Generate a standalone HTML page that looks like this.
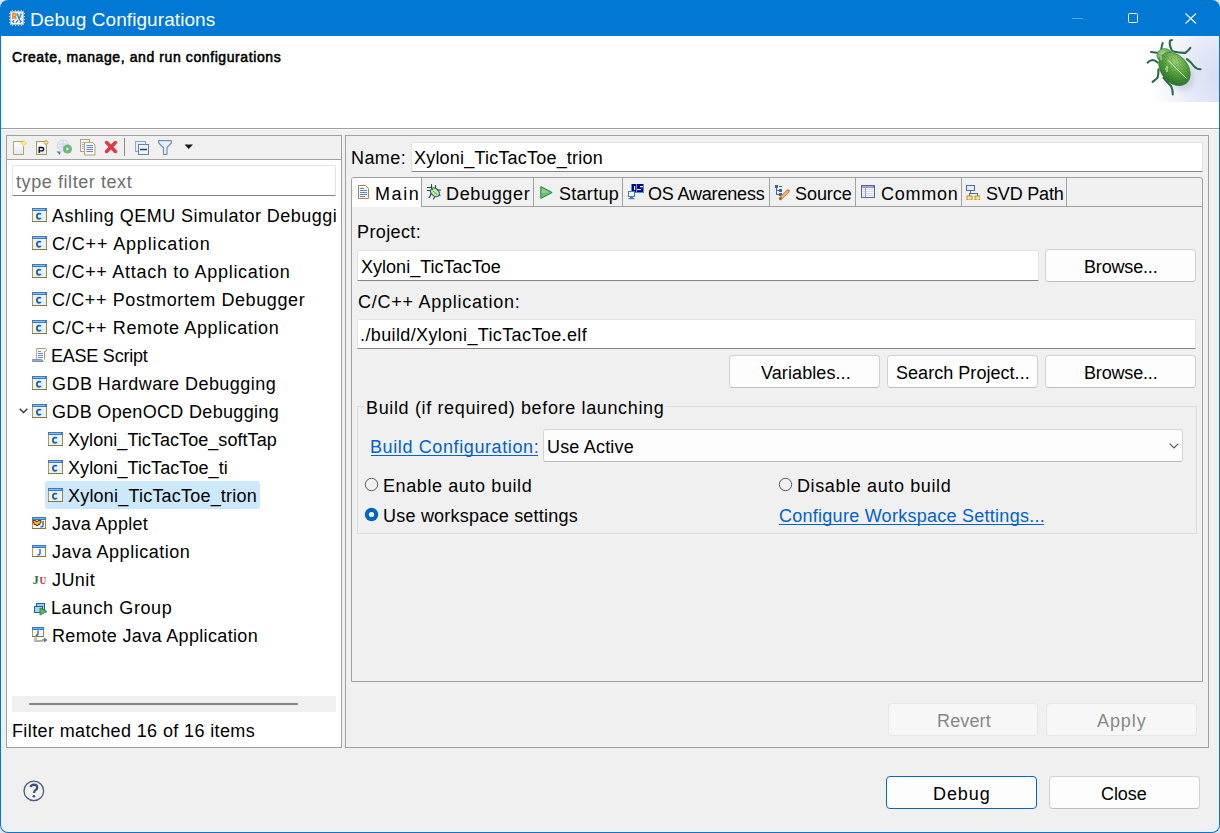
<!DOCTYPE html>
<html><head><meta charset="utf-8"><style>
html,body{margin:0;padding:0;width:1220px;height:833px;overflow:hidden;background:#dfe6ea;font-family:'Liberation Sans', sans-serif;}
#win{position:absolute;left:0;top:0;width:1220px;height:833px;overflow:hidden;}
</style></head><body><div id="win">
<div style="position:absolute;left:0px;top:0px;width:1220px;height:833px;background:#f0f0f0;border-radius:8px;"></div>
<div style="position:absolute;left:0px;top:0px;width:1220px;height:36px;background:#0078d4;border-radius:8px 8px 0 0;"></div>
<div style="position:absolute;left:0px;top:36px;width:1220px;height:797px;border:1px solid #0078d4;border-top:none;border-radius:0 0 8px 8px;box-sizing:border-box;"></div>
<div style="position:absolute;left:1px;top:36px;width:1218px;height:92px;background:#fff;"></div>
<div style="position:absolute;left:1px;top:128px;width:1218px;height:1px;background:#a0a0a0;"></div>
<div style="position:absolute;left:1px;top:129px;width:1218px;height:1px;background:#fff;"></div>
<svg style="position:absolute;left:9px;top:10px;" width="16" height="16" viewBox="0 0 16 16">
<rect x="1.5" y="1.5" width="13" height="13" fill="#f4f1ed" stroke="#b4bcc4"/>
<g fill="#d8dce0"><rect x="3" y="0" width="1" height="1"/><rect x="6" y="0" width="1" height="1"/><rect x="9" y="0" width="1" height="1"/><rect x="12" y="0" width="1" height="1"/>
<rect x="3" y="15" width="1" height="1"/><rect x="6" y="15" width="1" height="1"/><rect x="9" y="15" width="1" height="1"/><rect x="12" y="15" width="1" height="1"/>
<rect x="0" y="3" width="1" height="1"/><rect x="0" y="6" width="1" height="1"/><rect x="0" y="9" width="1" height="1"/><rect x="0" y="12" width="1" height="1"/>
<rect x="15" y="3" width="1" height="1"/><rect x="15" y="6" width="1" height="1"/><rect x="15" y="9" width="1" height="1"/><rect x="15" y="12" width="1" height="1"/></g>
<path d="M3.8 9V3.6H5.6Q7.1 3.6 7.1 5.1Q7.1 6.5 5.6 6.5H3.8M5.6 6.5L7.2 9" fill="none" stroke="#f07a2a" stroke-width="1.5"/>
<path d="M8.2 3.4L10.2 9L12.2 3.4" fill="none" stroke="#18a0dc" stroke-width="1.6"/>
<path d="M5 10.4L3.6 11.5L5 12.6M6.8 12.6L8.8 10.4M10.8 10.4L12.2 11.5L10.8 12.6" fill="none" stroke="#1a6fc8" stroke-width="1.1"/>
</svg>
<div style="position:absolute;left:30.00px;top:6.92px;font-size:19px;line-height:25px;font-weight:400;color:#fff;letter-spacing:0.075px;white-space:pre;">Debug Configurations</div>
<div style="position:absolute;left:1072px;top:18px;width:11px;height:1px;background:#58a3e6;"></div>
<div style="position:absolute;left:1128px;top:13px;width:10px;height:10px;border:1px solid #fff;border-radius:1.5px;box-sizing:border-box;"></div>
<svg style="position:absolute;left:1185px;top:13px;" width="12" height="11" viewBox="0 0 12 11"><path d="M0.5 0.5L11 10.5M11 0.5L0.5 10.5" stroke="#fff" stroke-width="1.1"/></svg>
<div style="position:absolute;left:12.00px;top:47.15px;font-size:14px;line-height:20px;font-weight:400;color:#000;letter-spacing:0.594px;white-space:pre;-webkit-text-stroke:0.55px #000;">Create, manage, and run configurations</div>
<div style="position:absolute;left:1146px;top:36px;width:73px;height:66px;background:radial-gradient(ellipse 95% 130% at 100% 62%, #d6dcf2 0%, #e3e7f6 38%, #f2f3fb 68%, rgba(255,255,255,0) 100%);"></div>
<svg style="position:absolute;left:1146px;top:36px;" width="73" height="66" viewBox="0 0 73 66">
<defs>
<radialGradient id="bgb" cx="0.35" cy="0.3" r="0.75"><stop offset="0" stop-color="#a8d880"/><stop offset="0.5" stop-color="#5aa840"/><stop offset="1" stop-color="#2a742c"/></radialGradient>
<radialGradient id="bgh" cx="0.4" cy="0.35" r="0.7"><stop offset="0" stop-color="#a8d880"/><stop offset="1" stop-color="#3a8a3a"/></radialGradient>
<pattern id="dots" width="2" height="2" patternUnits="userSpaceOnUse"><rect x="0" y="0" width="1" height="1" fill="#1e5a20"/></pattern>
<filter id="blr" x="-50%" y="-50%" width="200%" height="200%"><feGaussianBlur stdDeviation="2.5"/></filter>
</defs>
<ellipse cx="33" cy="38" rx="18" ry="13" transform="rotate(52 33 38)" fill="#8088a8" opacity="0.25" filter="url(#blr)"/>
<g stroke="#2a6a46" stroke-width="2.1" fill="none" stroke-linecap="round" stroke-linejoin="round">
<path d="M15 15.6 Q15.5 10 16.7 7.2"/><path d="M5 16 L13 17"/>
<path d="M26 14.8 Q23 9 24 4.7 L26 4"/>
<path d="M27.6 15.6 Q33 17 39.4 16.9 Q42 15 44.4 11.9"/>
<path d="M41 23.2 Q45 26 47.8 30 Q50 33 54.5 33.3"/>
<path d="M11.6 26.6 Q9 24 6.6 24 Q3.5 24.5 1.6 26.6"/>
<path d="M12.5 33.3 Q12.5 38 11.6 41.7 Q9 44 6.6 45.9"/>
<path d="M17.5 41.7 Q22 47 25 50.1 Q27 54 26.8 58.5"/>
</g>
<ellipse cx="18.4" cy="19.5" rx="7.5" ry="7" fill="url(#bgh)" stroke="#3a7a3a" stroke-width="0.6"/>
<ellipse cx="28.5" cy="33" rx="18.5" ry="13.5" transform="rotate(50 28.5 33)" fill="url(#bgb)" stroke="#3a7a38" stroke-width="0.6"/>
<ellipse cx="28.5" cy="33" rx="18" ry="13" transform="rotate(50 28.5 33)" fill="url(#dots)" opacity="0.5"/><path d="M21.7 24 L40.6 42.5" stroke="#dff3c8" stroke-width="0.9"/>
<path d="M20 31h2M19 33h3M20 35h2" stroke="#e8f6d8" stroke-width="1"/>
<path d="M14 21h2M14 23h2" stroke="#e0f0d0" stroke-width="0.9"/>
</svg>
<div style="position:absolute;left:6px;top:135px;width:336px;height:613px;border:1px solid #a0a0a0;box-sizing:border-box;background:#fff;"></div>
<div style="position:absolute;left:7px;top:136px;width:334px;height:23px;background:#f0f0f0;"></div>
<div style="position:absolute;left:7px;top:159px;width:334px;height:1px;background:#a0a0a0;"></div>
<svg style="position:absolute;left:13px;top:140px;" width="14" height="16" viewBox="0 0 14 16"><defs><linearGradient id="dg" x1="0" y1="0" x2="0" y2="1"><stop offset="0" stop-color="#ffffff"/><stop offset="1" stop-color="#dfe8f8"/></linearGradient></defs><path d="M0.5 1.5h10v13h-10z" fill="url(#dg)" stroke="#b8a468" shape-rendering="crispEdges"/><path d="M10.5 0.5v6M7.5 3.5h6" stroke="#f0c848" stroke-width="1.8"/><path d="M10.5 1.4v4.2M8.4 3.5h4.2" stroke="#fff6c0" stroke-width="0.7"/></svg>
<svg style="position:absolute;left:36px;top:139px;" width="14" height="17" viewBox="0 0 14 17"><path d="M0.5 2.5h10v13h-10z" fill="url(#dg)" stroke="#a89858" shape-rendering="crispEdges"/><path d="M3.2 14V8.5h2.4Q7.6 8.5 7.6 10.2Q7.6 11.9 5.6 11.9H3.2" fill="none" stroke="#111" stroke-width="1.3"/><path d="M10 0.5L12.8 3.5L10 6.5L7.2 3.5z" fill="#c89a20"/><path d="M10 1.5v4M8.2 3.5h3.6" stroke="#fff0b0" stroke-width="0.9"/></svg>
<svg style="position:absolute;left:56px;top:139px;" width="17" height="17" viewBox="0 0 17 17"><circle cx="7" cy="6.5" r="5.5" fill="#e8eef6" stroke="#b4c4dc" stroke-dasharray="1 0.6"/><path d="M3 5h8M3 8h8M7 1.5v10" stroke="#d0c0e0" stroke-width="0.6"/><circle cx="11.5" cy="10" r="4.5" fill="#6cb87a"/><path d="M10.4 8.2v3.6l3-1.8z" fill="#e8f8e8"/><path d="M0.5 12.5h4l-0.5 3.5z" fill="#5a78b0"/></svg>
<svg style="position:absolute;left:80px;top:139px;" width="16" height="17" viewBox="0 0 16 17"><rect x="0.5" y="0.5" width="9" height="12" fill="#f4f6fc" stroke="#b8a468"/><path d="M2 3.5h2M2 5.5h2M2 7.5h2M2 9.5h2" stroke="#8aa0c8" stroke-width="0.8"/><path d="M4.5 3.5h8l2.5 2.5v10h-10.5z" fill="#f4f6fc" stroke="#b8a468"/><path d="M6.5 6.5h6.5M6.5 8.5h6.5M6.5 10.5h6.5M6.5 12.5h6.5" stroke="#5a7cb8" stroke-width="0.9"/></svg>
<svg style="position:absolute;left:104px;top:140px;" width="14" height="14" viewBox="0 0 14 14"><path d="M2.6 2.6L11.4 11.4M11.4 2.6L2.6 11.4" stroke="#e03a48" stroke-width="3.6" stroke-linecap="round"/></svg>
<div style="position:absolute;left:124px;top:138px;width:1px;height:18px;background:#8c8c8c;"></div>
<svg style="position:absolute;left:135px;top:141px;" width="14" height="14" viewBox="0 0 14 14"><rect x="0.5" y="0.5" width="10" height="10" fill="#e4eefa" stroke="#8ea4c8"/><rect x="3.5" y="3.5" width="10" height="10" fill="#eef6fc" stroke="#6a7ea8"/><path d="M5 8.5h7" stroke="#1e4a88" stroke-width="1.6"/></svg>
<svg style="position:absolute;left:158px;top:140px;" width="14" height="15" viewBox="0 0 14 15"><path d="M0.7 0.7h12.6v2.3l-4.3 4.7v6.5l-3.5 0.6v-7.1l-4.8-4.7z" fill="#e2f4fc" stroke="#7a8cb0" stroke-width="1.2" stroke-linejoin="round"/></svg>
<svg style="position:absolute;left:184px;top:144px;" width="10" height="6" viewBox="0 0 10 6"><path d="M0.5 0.5h8.5l-4.25 4.5z" fill="#1a1a1a"/></svg>
<div style="position:absolute;left:12px;top:165px;width:324px;height:31px;background:#fff;border:1px solid #e3e3e3;border-bottom:1px solid #868686;box-sizing:border-box;border-radius:2px 2px 0 0;"></div>
<div style="position:absolute;left:16.00px;top:169.76px;font-size:18px;line-height:24px;font-weight:400;color:#6d6d6d;letter-spacing:0.577px;white-space:pre;">type filter text</div>
<div style="position:absolute;left:45px;top:481px;width:215px;height:28px;background:#cce8ff;border-radius:3px;"></div>
<div style="position:absolute;left:7px;top:200px;width:329px;height:495px;overflow:hidden;">
<svg style="position:absolute;left:25px;top:8px;" width="15" height="14" viewBox="0 0 15 14">
<rect x="1" y="3" width="13" height="10" fill="#e4f4fd"/>
<rect x="0" y="3" width="1" height="11" fill="#c0982e"/>
<rect x="14" y="3" width="1" height="11" fill="#a08838"/>
<rect x="0" y="13" width="15" height="1" fill="#857440"/>
<rect x="0" y="0" width="15" height="3" fill="#3f78bf"/>
<rect x="1" y="1" width="12" height="1" fill="#7fc0ee"/>
<path d="M8.9 6.2 Q8.3 5.5 7.1 5.5 Q4.9 5.6 4.9 8.2 Q4.9 10.8 7.1 10.9 Q8.3 10.9 8.9 10.1" fill="none" stroke="#24579a" stroke-width="1.7"/>
</svg>
<div style="position:absolute;left:45.00px;top:3.76px;font-size:18px;line-height:24px;font-weight:400;color:#000;letter-spacing:0.468px;white-space:pre;">Ashling QEMU Simulator Debuggi</div>
<svg style="position:absolute;left:25px;top:36px;" width="15" height="14" viewBox="0 0 15 14">
<rect x="1" y="3" width="13" height="10" fill="#e4f4fd"/>
<rect x="0" y="3" width="1" height="11" fill="#c0982e"/>
<rect x="14" y="3" width="1" height="11" fill="#a08838"/>
<rect x="0" y="13" width="15" height="1" fill="#857440"/>
<rect x="0" y="0" width="15" height="3" fill="#3f78bf"/>
<rect x="1" y="1" width="12" height="1" fill="#7fc0ee"/>
<path d="M8.9 6.2 Q8.3 5.5 7.1 5.5 Q4.9 5.6 4.9 8.2 Q4.9 10.8 7.1 10.9 Q8.3 10.9 8.9 10.1" fill="none" stroke="#24579a" stroke-width="1.7"/>
</svg>
<div style="position:absolute;left:45.00px;top:31.76px;font-size:18px;line-height:24px;font-weight:400;color:#000;letter-spacing:0.852px;white-space:pre;">C/C++ Application</div>
<svg style="position:absolute;left:25px;top:64px;" width="15" height="14" viewBox="0 0 15 14">
<rect x="1" y="3" width="13" height="10" fill="#e4f4fd"/>
<rect x="0" y="3" width="1" height="11" fill="#c0982e"/>
<rect x="14" y="3" width="1" height="11" fill="#a08838"/>
<rect x="0" y="13" width="15" height="1" fill="#857440"/>
<rect x="0" y="0" width="15" height="3" fill="#3f78bf"/>
<rect x="1" y="1" width="12" height="1" fill="#7fc0ee"/>
<path d="M8.9 6.2 Q8.3 5.5 7.1 5.5 Q4.9 5.6 4.9 8.2 Q4.9 10.8 7.1 10.9 Q8.3 10.9 8.9 10.1" fill="none" stroke="#24579a" stroke-width="1.7"/>
</svg>
<div style="position:absolute;left:45.00px;top:59.76px;font-size:18px;line-height:24px;font-weight:400;color:#000;letter-spacing:0.715px;white-space:pre;">C/C++ Attach to Application</div>
<svg style="position:absolute;left:25px;top:92px;" width="15" height="14" viewBox="0 0 15 14">
<rect x="1" y="3" width="13" height="10" fill="#e4f4fd"/>
<rect x="0" y="3" width="1" height="11" fill="#c0982e"/>
<rect x="14" y="3" width="1" height="11" fill="#a08838"/>
<rect x="0" y="13" width="15" height="1" fill="#857440"/>
<rect x="0" y="0" width="15" height="3" fill="#3f78bf"/>
<rect x="1" y="1" width="12" height="1" fill="#7fc0ee"/>
<path d="M8.9 6.2 Q8.3 5.5 7.1 5.5 Q4.9 5.6 4.9 8.2 Q4.9 10.8 7.1 10.9 Q8.3 10.9 8.9 10.1" fill="none" stroke="#24579a" stroke-width="1.7"/>
</svg>
<div style="position:absolute;left:45.00px;top:87.76px;font-size:18px;line-height:24px;font-weight:400;color:#000;letter-spacing:0.608px;white-space:pre;">C/C++ Postmortem Debugger</div>
<svg style="position:absolute;left:25px;top:120px;" width="15" height="14" viewBox="0 0 15 14">
<rect x="1" y="3" width="13" height="10" fill="#e4f4fd"/>
<rect x="0" y="3" width="1" height="11" fill="#c0982e"/>
<rect x="14" y="3" width="1" height="11" fill="#a08838"/>
<rect x="0" y="13" width="15" height="1" fill="#857440"/>
<rect x="0" y="0" width="15" height="3" fill="#3f78bf"/>
<rect x="1" y="1" width="12" height="1" fill="#7fc0ee"/>
<path d="M8.9 6.2 Q8.3 5.5 7.1 5.5 Q4.9 5.6 4.9 8.2 Q4.9 10.8 7.1 10.9 Q8.3 10.9 8.9 10.1" fill="none" stroke="#24579a" stroke-width="1.7"/>
</svg>
<div style="position:absolute;left:45.00px;top:115.76px;font-size:18px;line-height:24px;font-weight:400;color:#000;letter-spacing:0.635px;white-space:pre;">C/C++ Remote Application</div>
<svg style="position:absolute;left:25px;top:148px;" width="15" height="15" viewBox="0 0 15 15"><path d="M4.5 0.5h9a1.6 1.6 0 0 1 0 3h-1v8" fill="#f2f6fc" stroke="#b0a060"/><rect x="4" y="1" width="8" height="11" fill="#eef4fc"/><path d="M4.5 1v10" stroke="#b8b080"/><path d="M6 3.5h3M6 5.5h5M6 7.5h5M6 9.5h5" stroke="#6a84bc" stroke-width="0.9"/><path d="M0.5 11.5h9l2 2h-9.5a1.2 1.2 0 0 1 -1.5 -2z" fill="#9aa8c8" stroke="#8090b8"/></svg>
<div style="position:absolute;left:44.00px;top:143.76px;font-size:18px;line-height:24px;font-weight:400;color:#000;letter-spacing:-0.233px;white-space:pre;">EASE Script</div>
<svg style="position:absolute;left:25px;top:176px;" width="15" height="14" viewBox="0 0 15 14">
<rect x="1" y="3" width="13" height="10" fill="#e4f4fd"/>
<rect x="0" y="3" width="1" height="11" fill="#c0982e"/>
<rect x="14" y="3" width="1" height="11" fill="#a08838"/>
<rect x="0" y="13" width="15" height="1" fill="#857440"/>
<rect x="0" y="0" width="15" height="3" fill="#3f78bf"/>
<rect x="1" y="1" width="12" height="1" fill="#7fc0ee"/>
<path d="M8.9 6.2 Q8.3 5.5 7.1 5.5 Q4.9 5.6 4.9 8.2 Q4.9 10.8 7.1 10.9 Q8.3 10.9 8.9 10.1" fill="none" stroke="#24579a" stroke-width="1.7"/>
</svg>
<div style="position:absolute;left:45.00px;top:171.76px;font-size:18px;line-height:24px;font-weight:400;color:#000;letter-spacing:0.457px;white-space:pre;">GDB Hardware Debugging</div>
<svg style="position:absolute;left:25px;top:204px;" width="15" height="14" viewBox="0 0 15 14">
<rect x="1" y="3" width="13" height="10" fill="#e4f4fd"/>
<rect x="0" y="3" width="1" height="11" fill="#c0982e"/>
<rect x="14" y="3" width="1" height="11" fill="#a08838"/>
<rect x="0" y="13" width="15" height="1" fill="#857440"/>
<rect x="0" y="0" width="15" height="3" fill="#3f78bf"/>
<rect x="1" y="1" width="12" height="1" fill="#7fc0ee"/>
<path d="M8.9 6.2 Q8.3 5.5 7.1 5.5 Q4.9 5.6 4.9 8.2 Q4.9 10.8 7.1 10.9 Q8.3 10.9 8.9 10.1" fill="none" stroke="#24579a" stroke-width="1.7"/>
</svg>
<svg style="position:absolute;left:12px;top:208px;" width="9" height="6" viewBox="0 0 9 6"><path d="M0.7 0.7L4.5 4.5L8.3 0.7" stroke="#333" stroke-width="1.3" fill="none"/></svg>
<div style="position:absolute;left:45.00px;top:199.76px;font-size:18px;line-height:24px;font-weight:400;color:#000;letter-spacing:0.330px;white-space:pre;">GDB OpenOCD Debugging</div>
<svg style="position:absolute;left:41px;top:232px;" width="15" height="14" viewBox="0 0 15 14">
<rect x="1" y="3" width="13" height="10" fill="#e4f4fd"/>
<rect x="0" y="3" width="1" height="11" fill="#c0982e"/>
<rect x="14" y="3" width="1" height="11" fill="#a08838"/>
<rect x="0" y="13" width="15" height="1" fill="#857440"/>
<rect x="0" y="0" width="15" height="3" fill="#3f78bf"/>
<rect x="1" y="1" width="12" height="1" fill="#7fc0ee"/>
<path d="M8.9 6.2 Q8.3 5.5 7.1 5.5 Q4.9 5.6 4.9 8.2 Q4.9 10.8 7.1 10.9 Q8.3 10.9 8.9 10.1" fill="none" stroke="#24579a" stroke-width="1.7"/>
</svg>
<div style="position:absolute;left:61.00px;top:227.76px;font-size:18px;line-height:24px;font-weight:400;color:#000;letter-spacing:0.055px;white-space:pre;">Xyloni_TicTacToe_softTap</div>
<svg style="position:absolute;left:41px;top:260px;" width="15" height="14" viewBox="0 0 15 14">
<rect x="1" y="3" width="13" height="10" fill="#e4f4fd"/>
<rect x="0" y="3" width="1" height="11" fill="#c0982e"/>
<rect x="14" y="3" width="1" height="11" fill="#a08838"/>
<rect x="0" y="13" width="15" height="1" fill="#857440"/>
<rect x="0" y="0" width="15" height="3" fill="#3f78bf"/>
<rect x="1" y="1" width="12" height="1" fill="#7fc0ee"/>
<path d="M8.9 6.2 Q8.3 5.5 7.1 5.5 Q4.9 5.6 4.9 8.2 Q4.9 10.8 7.1 10.9 Q8.3 10.9 8.9 10.1" fill="none" stroke="#24579a" stroke-width="1.7"/>
</svg>
<div style="position:absolute;left:61.00px;top:255.76px;font-size:18px;line-height:24px;font-weight:400;color:#000;letter-spacing:0.072px;white-space:pre;">Xyloni_TicTacToe_ti</div>
<svg style="position:absolute;left:41px;top:288px;" width="15" height="14" viewBox="0 0 15 14">
<rect x="1" y="3" width="13" height="10" fill="#e4f4fd"/>
<rect x="0" y="3" width="1" height="11" fill="#c0982e"/>
<rect x="14" y="3" width="1" height="11" fill="#a08838"/>
<rect x="0" y="13" width="15" height="1" fill="#857440"/>
<rect x="0" y="0" width="15" height="3" fill="#3f78bf"/>
<rect x="1" y="1" width="12" height="1" fill="#7fc0ee"/>
<path d="M8.9 6.2 Q8.3 5.5 7.1 5.5 Q4.9 5.6 4.9 8.2 Q4.9 10.8 7.1 10.9 Q8.3 10.9 8.9 10.1" fill="none" stroke="#24579a" stroke-width="1.7"/>
</svg>
<div style="position:absolute;left:61.00px;top:283.76px;font-size:18px;line-height:24px;font-weight:400;color:#000;letter-spacing:0.204px;white-space:pre;">Xyloni_TicTacToe_trion</div>
<svg style="position:absolute;left:25px;top:317px;" width="14" height="16" viewBox="0 0 14 16">
<rect x="1" y="3" width="12" height="8" fill="#eef8fe"/>
<rect x="0" y="3" width="1" height="9" fill="#c0982e"/>
<rect x="13" y="3" width="1" height="9" fill="#a08838"/>
<rect x="0" y="11" width="14" height="1" fill="#857440"/>
<rect x="0" y="0" width="14" height="3" fill="#3f78bf"/>
<rect x="1" y="1" width="12" height="1" fill="#5ab8ec"/>
<path d="M1 3.5h3v1h2v-1h3v2h-1v2h-2v1h-2v-1h-2v-2h-1z" fill="#f8b830" stroke="#5a2a10" stroke-width="0.9"/><path d="M11 4v4.5a1.5 1.5 0 0 1 -2.5 1" fill="none" stroke="#2a5e9e" stroke-width="1.3"/></svg>
<div style="position:absolute;left:45.00px;top:311.76px;font-size:18px;line-height:24px;font-weight:400;color:#000;letter-spacing:0.264px;white-space:pre;">Java Applet</div>
<svg style="position:absolute;left:25px;top:345px;" width="14" height="16" viewBox="0 0 14 16">
<rect x="1" y="3" width="12" height="8" fill="#eef8fe"/>
<rect x="0" y="3" width="1" height="9" fill="#c0982e"/>
<rect x="13" y="3" width="1" height="9" fill="#a08838"/>
<rect x="0" y="11" width="14" height="1" fill="#857440"/>
<rect x="0" y="0" width="14" height="3" fill="#3f78bf"/>
<rect x="1" y="1" width="12" height="1" fill="#5ab8ec"/>
<path d="M8 4v4.5a1.5 1.5 0 0 1 -2.5 1" fill="none" stroke="#2a5e9e" stroke-width="1.3"/></svg>
<div style="position:absolute;left:45.00px;top:339.76px;font-size:18px;line-height:24px;font-weight:400;color:#000;letter-spacing:0.509px;white-space:pre;">Java Application</div>
<svg style="position:absolute;left:25px;top:373px;" width="16" height="12" viewBox="0 0 16 12"><text x="0.5" y="10.8" font-family="Liberation Serif" font-size="12.5" font-weight="700" fill="#1a7a3a">J</text><text x="7.6" y="10.8" font-family="Liberation Serif" font-size="9.5" font-weight="700" fill="#d03040">U</text></svg>
<div style="position:absolute;left:45.00px;top:367.76px;font-size:18px;line-height:24px;font-weight:400;color:#000;letter-spacing:0.423px;white-space:pre;">JUnit</div>
<svg style="position:absolute;left:26px;top:402px;" width="15" height="14" viewBox="0 0 15 14"><rect x="3.5" y="1.5" width="8" height="6" fill="#9ccaf0" stroke="#2a5e94"/><rect x="1.5" y="4.5" width="8" height="6" fill="#a8d4f4" stroke="#2a5e94"/><path d="M7 6v7l7-3.5z" fill="#5cb868" stroke="#1e7a34" stroke-width="0.8"/></svg>
<div style="position:absolute;left:44.00px;top:395.76px;font-size:18px;line-height:24px;font-weight:400;color:#000;letter-spacing:0.603px;white-space:pre;">Launch Group</div>
<svg style="position:absolute;left:25px;top:427px;" width="12" height="14" viewBox="0 0 12 14">
<rect x="1" y="3" width="10" height="6" fill="#eef8fe"/>
<rect x="0" y="3" width="1" height="7" fill="#c0982e"/>
<rect x="11" y="3" width="1" height="7" fill="#a08838"/>
<rect x="0" y="9" width="12" height="1" fill="#857440"/>
<rect x="0" y="0" width="12" height="3" fill="#3f78bf"/>
<rect x="1" y="1" width="10" height="1" fill="#5ab8ec"/>
<path d="M6 3.5v3.5a1.4 1.4 0 0 1 -2.2 1" fill="none" stroke="#2a5e9e" stroke-width="1.3"/></svg>
<svg style="position:absolute;left:26px;top:436px;" width="15" height="7" viewBox="0 0 15 7"><path d="M2.5 0.5v4.5h7" fill="none" stroke="#8a94bc" stroke-width="2.2"/><path d="M2.5 0.5v4.5h7" fill="none" stroke="#e8c878" stroke-width="1"/><path d="M9 4h3" stroke="#6a7090" stroke-width="1.2"/><path d="M11 1.5l3.5 2.5-3.5 2.5z" fill="#6a7090"/></svg>
<div style="position:absolute;left:45.00px;top:423.76px;font-size:18px;line-height:24px;font-weight:400;color:#000;letter-spacing:0.346px;white-space:pre;">Remote Java Application</div>
</div>
<div style="position:absolute;left:12px;top:696px;width:324px;height:16px;background:#f0f0f0;"></div>
<div style="position:absolute;left:29px;top:703px;width:269px;height:2px;background:#858585;border-radius:1px;"></div>
<div style="position:absolute;left:12.00px;top:718.76px;font-size:18px;line-height:24px;font-weight:400;color:#000;letter-spacing:0.379px;white-space:pre;">Filter matched 16 of 16 items</div>
<svg style="position:absolute;left:23px;top:780px;" width="22" height="22" viewBox="0 0 22 22"><circle cx="10.8" cy="10.9" r="9.8" fill="#f2f2f2" stroke="#4c5c7c" stroke-width="1.3"/><path d="M7.6 7.2 Q7.9 4.6 10.9 4.6 Q14.2 4.7 14.2 7.4 Q14.2 9.1 12.5 10.1 Q11.1 11 11.1 13" fill="none" stroke="#3e5080" stroke-width="2.3"/><circle cx="10.9" cy="16.2" r="1.3" fill="#3e5080"/></svg>
<div style="position:absolute;left:345px;top:135px;width:864px;height:613px;border:1px solid #a0a0a0;box-sizing:border-box;"></div>
<div style="position:absolute;left:351.00px;top:145.76px;font-size:18px;line-height:24px;font-weight:400;color:#000;letter-spacing:0.421px;white-space:pre;">Name:</div>
<div style="position:absolute;left:411px;top:142px;width:792px;height:30px;background:#fff;border:1px solid #e3e3e3;border-bottom:1px solid #868686;box-sizing:border-box;border-radius:2px 2px 0 0;"></div>
<div style="position:absolute;left:414.00px;top:145.76px;font-size:18px;line-height:24px;font-weight:400;color:#000;letter-spacing:0.204px;white-space:pre;">Xyloni_TicTacToe_trion</div>
<div style="position:absolute;left:351px;top:177px;width:852px;height:505px;border:1px solid #a0a0a0;box-sizing:border-box;border-radius:3px 3px 0 0;"></div>
<div style="position:absolute;left:352px;top:206px;width:850px;height:1px;background:#a0a0a0;"></div>
<div style="position:absolute;left:352px;top:178px;width:69px;height:29px;background:#fff;border-radius:2px 0 0 0;"></div>
<div style="position:absolute;left:421px;top:178px;width:1px;height:29px;background:#a0a0a0;"></div>
<div style="position:absolute;left:533px;top:178px;width:1px;height:29px;background:#a0a0a0;"></div>
<div style="position:absolute;left:622px;top:178px;width:1px;height:29px;background:#a0a0a0;"></div>
<div style="position:absolute;left:769px;top:178px;width:1px;height:29px;background:#a0a0a0;"></div>
<div style="position:absolute;left:855px;top:178px;width:1px;height:29px;background:#a0a0a0;"></div>
<div style="position:absolute;left:961px;top:178px;width:1px;height:29px;background:#a0a0a0;"></div>
<div style="position:absolute;left:1066px;top:178px;width:1px;height:29px;background:#a0a0a0;"></div>
<svg style="position:absolute;left:358px;top:185px;" width="11" height="14" viewBox="0 0 11 14"><path d="M0.5 0.5h7l3 3v10h-10z" fill="#eef3fa" stroke="#a08850"/><path d="M2 3.5h4M2 5.5h7M2 7.5h7M2 9.5h7M2 11.5h5" stroke="#5a78b0" stroke-width="0.9"/></svg>
<svg style="position:absolute;left:426px;top:183px;" width="17" height="17" viewBox="0 0 17 17"><g stroke="#1e4a3a" stroke-width="1.1" stroke-linecap="round" fill="none"><path d="M5.5 1.5v3.5M1.5 4.5h4M9.5 2.5v3M10.5 6l2 1h2M1.5 7.5h2l2 1M12.5 11l1.5 1.5M5 10.5l-1 3M8.5 14l-1 2M4 13.5l-1 1"/></g><ellipse cx="9" cy="9.3" rx="3.6" ry="5" transform="rotate(-45 9 9.3)" fill="#c8eaa0" stroke="#1e5e80" stroke-width="1.2"/><path d="M7 8l4 3.5" stroke="#4aa040" stroke-width="0.9"/><circle cx="6.5" cy="6.5" r="0.8" fill="#2a8a2a"/></svg>
<svg style="position:absolute;left:540px;top:186px;" width="13" height="13" viewBox="0 0 13 13"><path d="M0.8 0.6L12.2 6.5L0.8 12.4z" fill="#6cc070" stroke="#1e8a44" stroke-width="1"/><path d="M1.8 2.5L9 6.5L1.8 7z" fill="#a8dc90" opacity="0.7"/></svg>
<svg style="position:absolute;left:627px;top:183px;" width="18" height="17" viewBox="0 0 18 17"><rect x="4.5" y="1.5" width="12" height="8" fill="#e8f4fc" stroke="#4a90dc"/><rect x="5" y="1" width="11" height="8" fill="#000a80"/><rect x="7" y="3" width="1.2" height="4" fill="#e8f0ff"/><rect x="13" y="3" width="3" height="1.3" fill="#e8f0ff"/><rect x="10" y="6" width="4" height="1.1" fill="#e8f0ff"/><rect x="9.4" y="1" width="0.7" height="8" fill="#b8c8f0"/><rect x="1.5" y="8.5" width="6" height="5" fill="#e8f6fe" stroke="#4a7ab8"/><rect x="3" y="14" width="3" height="1" fill="#4a7ab8"/><rect x="1.5" y="15" width="6" height="1.2" fill="#4a7ab8"/></svg>
<svg style="position:absolute;left:774px;top:184px;" width="17" height="17" viewBox="0 0 17 17"><g fill="#3c64a8"><rect x="1" y="1" width="3" height="3"/><rect x="5" y="2" width="3" height="1"/><rect x="2" y="4" width="1" height="7"/><rect x="3" y="6" width="2" height="1"/><rect x="5" y="5" width="3" height="3"/><rect x="3" y="10" width="2" height="1"/><rect x="5" y="9" width="3" height="3"/></g><path d="M6.5 14.5L14 7" stroke="#c07a30" stroke-width="3.4" stroke-linecap="round"/><path d="M6.5 14.5L14 7" stroke="#f4b870" stroke-width="2"/><path d="M5 16l2-3 1 1z" fill="#5a3a20"/></svg>
<svg style="position:absolute;left:861px;top:185px;" width="14" height="13" viewBox="0 0 14 13"><rect x="0.5" y="0.5" width="13" height="12" fill="#f4f6fa" stroke="#56688a"/><rect x="1" y="1" width="12" height="2" fill="#7888a8"/><rect x="1" y="1.5" width="11" height="0.8" fill="#c8d0e0"/><path d="M1 4.5h12M1 6.5h12M1 8.5h12M1 10.5h12" stroke="#d0d8e4" stroke-width="0.8"/><path d="M4.5 3v9" stroke="#8a98b4" stroke-width="0.9"/></svg>
<svg style="position:absolute;left:966px;top:185px;" width="14" height="15" viewBox="0 0 14 15"><rect x="0.5" y="0.5" width="8" height="5" fill="#e4ecf8" stroke="#4a6ea8"/><path d="M4.5 6v2.5M3.5 8.5h8M3.5 8v3M11.5 8v3" stroke="#4a6ea8"/><rect x="1" y="11" width="5" height="4" fill="#f8e890" stroke="#b89020"/><rect x="9" y="11" width="5" height="4" fill="#f8e890" stroke="#b89020"/></svg>
<div style="position:absolute;left:375.00px;top:181.76px;font-size:18px;line-height:24px;font-weight:400;color:#000;letter-spacing:1.565px;white-space:pre;">Main</div>
<div style="position:absolute;left:446.00px;top:181.76px;font-size:18px;line-height:24px;font-weight:400;color:#000;letter-spacing:0.662px;white-space:pre;">Debugger</div>
<div style="position:absolute;left:559.00px;top:181.76px;font-size:18px;line-height:24px;font-weight:400;color:#000;letter-spacing:0.279px;white-space:pre;">Startup</div>
<div style="position:absolute;left:648.00px;top:181.76px;font-size:18px;line-height:24px;font-weight:400;color:#000;letter-spacing:-0.184px;white-space:pre;">OS Awareness</div>
<div style="position:absolute;left:795.00px;top:181.76px;font-size:18px;line-height:24px;font-weight:400;color:#000;letter-spacing:-0.064px;white-space:pre;">Source</div>
<div style="position:absolute;left:881.00px;top:181.76px;font-size:18px;line-height:24px;font-weight:400;color:#000;letter-spacing:0.738px;white-space:pre;">Common</div>
<div style="position:absolute;left:986.00px;top:181.76px;font-size:18px;line-height:24px;font-weight:400;color:#000;letter-spacing:-0.190px;white-space:pre;">SVD Path</div>
<div style="position:absolute;left:357.00px;top:219.76px;font-size:18px;line-height:24px;font-weight:400;color:#000;letter-spacing:0.383px;white-space:pre;">Project:</div>
<div style="position:absolute;left:357px;top:250px;width:682px;height:31px;background:#fff;border:1px solid #e3e3e3;border-bottom:1px solid #868686;box-sizing:border-box;border-radius:2px 2px 0 0;"></div>
<div style="position:absolute;left:361.00px;top:254.76px;font-size:18px;line-height:24px;font-weight:400;color:#000;letter-spacing:0.021px;white-space:pre;">Xyloni_TicTacToe</div>
<div style="position:absolute;left:1045px;top:249px;width:151px;height:33px;background:#fdfdfd;border:1px solid #d2d2d2;border-bottom-color:#bdbdbd;box-sizing:border-box;border-radius:4px;"></div>
<div style="position:absolute;left:1084.00px;top:254.76px;font-size:18px;line-height:24px;font-weight:400;color:#000;letter-spacing:-0.165px;white-space:pre;">Browse...</div>
<div style="position:absolute;left:358.00px;top:289.76px;font-size:18px;line-height:24px;font-weight:400;color:#000;letter-spacing:0.742px;white-space:pre;">C/C++ Application:</div>
<div style="position:absolute;left:357px;top:319px;width:839px;height:30px;background:#fff;border:1px solid #e3e3e3;border-bottom:1px solid #868686;box-sizing:border-box;border-radius:2px 2px 0 0;"></div>
<div style="position:absolute;left:360.00px;top:322.76px;font-size:18px;line-height:24px;font-weight:400;color:#000;letter-spacing:0.380px;white-space:pre;">./build/Xyloni_TicTacToe.elf</div>
<div style="position:absolute;left:729px;top:355px;width:151px;height:33px;background:#fdfdfd;border:1px solid #d2d2d2;border-bottom-color:#bdbdbd;box-sizing:border-box;border-radius:4px;"></div>
<div style="position:absolute;left:887px;top:355px;width:151px;height:33px;background:#fdfdfd;border:1px solid #d2d2d2;border-bottom-color:#bdbdbd;box-sizing:border-box;border-radius:4px;"></div>
<div style="position:absolute;left:1045px;top:355px;width:151px;height:33px;background:#fdfdfd;border:1px solid #d2d2d2;border-bottom-color:#bdbdbd;box-sizing:border-box;border-radius:4px;"></div>
<div style="position:absolute;left:761.00px;top:360.76px;font-size:18px;line-height:24px;font-weight:400;color:#000;letter-spacing:0.090px;white-space:pre;">Variables...</div>
<div style="position:absolute;left:896.00px;top:360.76px;font-size:18px;line-height:24px;font-weight:400;color:#000;letter-spacing:0.040px;white-space:pre;">Search Project...</div>
<div style="position:absolute;left:1084.00px;top:360.76px;font-size:18px;line-height:24px;font-weight:400;color:#000;letter-spacing:-0.165px;white-space:pre;">Browse...</div>
<div style="position:absolute;left:357px;top:406px;width:840px;height:128px;border:1px solid #dcdcdc;box-sizing:border-box;"></div>
<div style="position:absolute;left:364px;top:398px;width:302px;height:18px;background:#f0f0f0;"></div>
<div style="position:absolute;left:366.00px;top:395.76px;font-size:18px;line-height:24px;font-weight:400;color:#000;letter-spacing:0.644px;white-space:pre;">Build (if required) before launching</div>
<div style="position:absolute;left:370.00px;top:434.76px;font-size:18px;line-height:24px;font-weight:400;color:#0062cc;letter-spacing:0.611px;white-space:pre;">Build Configuration:</div>
<div style="position:absolute;left:371px;top:455px;width:167px;height:1px;background:#0062cc;"></div>
<div style="position:absolute;left:543px;top:429px;width:640px;height:33px;background:#fdfdfd;border:1px solid #d6d6d6;border-bottom-color:#bcbcbc;box-sizing:border-box;border-radius:3px;"></div>
<div style="position:absolute;left:547.00px;top:434.76px;font-size:18px;line-height:24px;font-weight:400;color:#000;letter-spacing:0.187px;white-space:pre;">Use Active</div>
<svg style="position:absolute;left:1169px;top:443px;" width="10" height="6" viewBox="0 0 10 6"><path d="M0.7 0.7L5 5L9.3 0.7" stroke="#555" stroke-width="1.1" fill="none"/></svg>
<svg style="position:absolute;left:364px;top:477px;" width="15" height="15" viewBox="0 0 15 15"><circle cx="7.5" cy="7.5" r="6.2" fill="none" stroke="#5a5a5a" stroke-width="1"/></svg>
<svg style="position:absolute;left:364px;top:507px;" width="15" height="15" viewBox="0 0 15 15"><circle cx="7.5" cy="7.5" r="6.7" fill="#0067c0"/><circle cx="7.5" cy="7.5" r="2.6" fill="#fff"/></svg>
<svg style="position:absolute;left:778px;top:477px;" width="15" height="15" viewBox="0 0 15 15"><circle cx="7.5" cy="7.5" r="6.2" fill="none" stroke="#5a5a5a" stroke-width="1"/></svg>
<div style="position:absolute;left:383.00px;top:473.76px;font-size:18px;line-height:24px;font-weight:400;color:#000;letter-spacing:0.600px;white-space:pre;">Enable auto build</div>
<div style="position:absolute;left:383.00px;top:503.76px;font-size:18px;line-height:24px;font-weight:400;color:#000;letter-spacing:0.220px;white-space:pre;">Use workspace settings</div>
<div style="position:absolute;left:797.00px;top:473.76px;font-size:18px;line-height:24px;font-weight:400;color:#000;letter-spacing:0.624px;white-space:pre;">Disable auto build</div>
<div style="position:absolute;left:779.00px;top:503.76px;font-size:18px;line-height:24px;font-weight:400;color:#0062cc;letter-spacing:0.264px;white-space:pre;">Configure Workspace Settings...</div>
<div style="position:absolute;left:779px;top:524px;width:265px;height:1px;background:#0062cc;"></div>
<div style="position:absolute;left:888px;top:703px;width:150px;height:33px;background:#f7f7f7;border:1px solid #e6e6e6;box-sizing:border-box;border-radius:4px;"></div>
<div style="position:absolute;left:1046px;top:703px;width:151px;height:33px;background:#f7f7f7;border:1px solid #e6e6e6;box-sizing:border-box;border-radius:4px;"></div>
<div style="position:absolute;left:937.00px;top:708.76px;font-size:18px;line-height:24px;font-weight:400;color:#878787;letter-spacing:0.137px;white-space:pre;">Revert</div>
<div style="position:absolute;left:1097.00px;top:708.76px;font-size:18px;line-height:24px;font-weight:400;color:#878787;letter-spacing:0.918px;white-space:pre;">Apply</div>
<div style="position:absolute;left:886px;top:776px;width:151px;height:33px;background:#fdfdfd;border:1px solid #0067c0;box-sizing:border-box;border-radius:4px;"></div>
<div style="position:absolute;left:1049px;top:776px;width:151px;height:33px;background:#fdfdfd;border:1px solid #d2d2d2;border-bottom-color:#bdbdbd;box-sizing:border-box;border-radius:4px;"></div>
<div style="position:absolute;left:933.00px;top:781.76px;font-size:18px;line-height:24px;font-weight:400;color:#000;letter-spacing:0.917px;white-space:pre;">Debug</div>
<div style="position:absolute;left:1101.00px;top:781.76px;font-size:18px;line-height:24px;font-weight:400;color:#000;letter-spacing:-0.077px;white-space:pre;">Close</div>
</div></body></html>
